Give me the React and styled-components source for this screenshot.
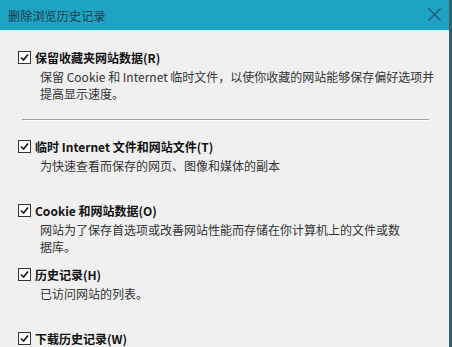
import React from "react";
import styled, { createGlobalStyle } from "styled-components";

const Global = createGlobalStyle`
  html, body { margin: 0; padding: 0; background: #f0f0f0; }
  body { font-family: "Noto Sans CJK SC", "Noto Sans", sans-serif; }
`;

const Window = styled.div`
  width: 449px;
  height: 347px;
  background: #f0f0f0;
  border-right: 3px solid #335f73;
  overflow: hidden;
  display: flex;
  flex-direction: column;
`;

const TitleBar = styled.div`
  height: 30px;
  flex: none;
  background: #1ea3c3;
  display: flex;
  align-items: center;
  justify-content: space-between;
  padding: 0 8px 0 8px;
  border-bottom: 2px solid #dcf0f6;
`;

const Title = styled.span`
  font-size: 12px;
  color: #1a3848;
  letter-spacing: 0.2px;
`;

const Close = styled.svg`
  width: 13px;
  height: 13px;
  margin-right: 0;
  margin-bottom: 2px;
`;

const Content = styled.div`
  padding: 17px 0 0 18px;
  display: flex;
  flex-direction: column;
`;

const Item = styled.div`
  display: flex;
  flex-direction: column;
  margin-bottom: ${(p) => p.$gap}px;
`;

const ItemHead = styled.label`
  display: flex;
  align-items: center;
  height: 16px;
  gap: 4px;
`;

const Box = styled.span`
  width: 11px;
  height: 11px;
  border: 1px solid #333;
  background: #fff;
  display: flex;
  align-items: center;
  justify-content: center;
`;

const ItemTitle = styled.span`
  font-size: 12px;
  font-weight: bold;
  color: #111;
  white-space: nowrap;
`;

const Desc = styled.div`
  margin-top: 3px;
  margin-left: 22px;
  min-height: 34px;
  font-size: 12px;
  line-height: 17px;
  color: #333;
`;

const Line = styled.div`
  white-space: nowrap;
`;

const Separator = styled.div`
  width: 407px;
  margin: 17px 0 17px 4px;
  height: 1px;
  background: #a0a0a0;
  border-bottom: 1px solid #ffffff;
`;

const Check = () => (
  <Box>
    <svg width="9" height="9" viewBox="0 0 9 9">
      <path d="M1 4.5 L3.5 7 L8 1.5" fill="none" stroke="#111" strokeWidth="1.6" />
    </svg>
  </Box>
);

const items = [
  {
    title: "保留收藏夹网站数据(R)",
    desc: ["保留 Cookie 和 Internet 临时文件，以使你收藏的网站能够保存偏好选项并", "提高显示速度。"],
  },
  { sep: true },
  { title: "临时 Internet 文件和网站文件(T)", desc: ["为快速查看而保存的网页、图像和媒体的副本"] },
  {
    title: "Cookie 和网站数据(O)",
    desc: ["网站为了保存首选项或改善网站性能而存储在你计算机上的文件或数", "据库。"],
  },
  { title: "历史记录(H)", desc: ["已访问网站的列表。"] },
  { title: "下载历史记录(W)", desc: [] },
];

export default function App() {
  return (
    <>
      <Global />
      <Window>
        <TitleBar>
          <Title>删除浏览历史记录</Title>
          <Close viewBox="0 0 13 13">
            <path d="M0.5 0.5 L12.5 12.5 M12.5 0.5 L0.5 12.5" stroke="#1d5569" strokeWidth="1.1" />
          </Close>
        </TitleBar>
        <Content>
          {items.map((it, i) =>
            it.sep ? (
              <Separator key={i} />
            ) : (
              <Item key={i} $gap={i === 0 ? 0 : 11}>
                <ItemHead>
                  <Check />
                  <ItemTitle>{it.title}</ItemTitle>
                </ItemHead>
                <Desc>
                  {it.desc.map((d, j) => (
                    <Line key={j}>{d}</Line>
                  ))}
                </Desc>
              </Item>
            )
          )}
        </Content>
      </Window>
    </>
  );
}
